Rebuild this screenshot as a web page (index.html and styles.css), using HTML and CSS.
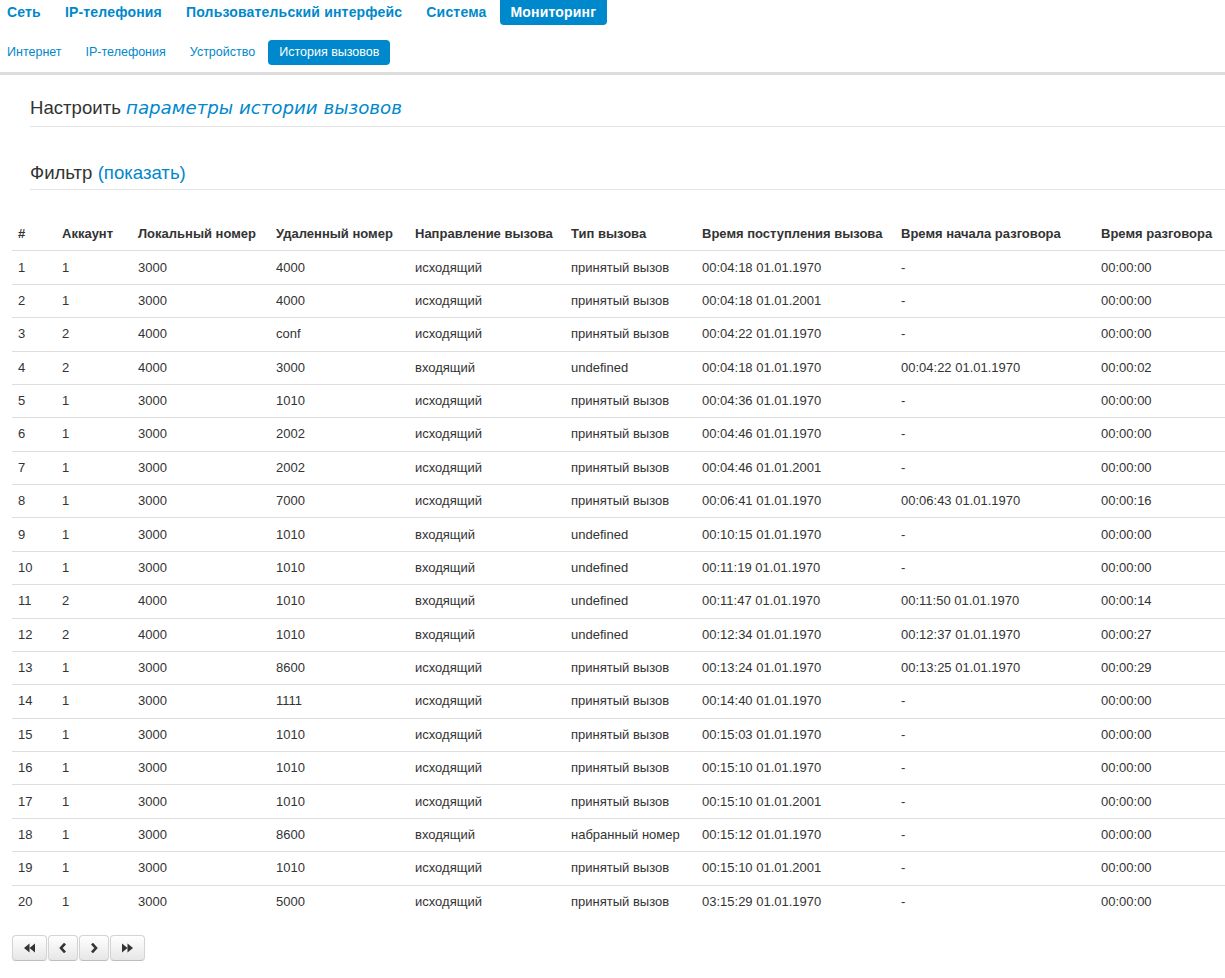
FILE: index.html
```html
<!DOCTYPE html>
<html lang="ru">
<head>
	<meta charset="utf-8">
	<title>История вызовов</title>
	<link rel="stylesheet" href="styles.css">
</head>
<body>
	<div class="menu">
		<ul class="nav nav-main">
			<li><a href="#">Сеть</a></li>
			<li><a href="#">IP-телефония</a></li>
			<li><a href="#">Пользовательский интерфейс</a></li>
			<li><a href="#">Система</a></li>
			<li class="active"><a href="#">Мониторинг</a></li>
		</ul>
		<ul class="nav nav-sub">
			<li><a href="#">Интернет</a></li>
			<li><a href="#">IP-телефония</a></li>
			<li><a href="#">Устройство</a></li>
			<li class="active"><a href="#">История вызовов</a></li>
		</ul>
	</div>

	<div class="content">
		<h3 class="section first">Настроить <a href="#" class="settings">параметры истории вызовов</a></h3>
		<h3 class="section">Фильтр <a href="#">(показать)</a></h3>
	</div>

	<table class="calls">
		<colgroup>
			<col class="c-num"><col class="c-acc"><col class="c-local"><col class="c-remote">
			<col class="c-dir"><col class="c-type"><col class="c-time"><col class="c-start"><col class="c-dur">
		</colgroup>
		<thead>
			<tr>
				<th>#</th>
				<th>Аккаунт</th>
				<th>Локальный номер</th>
				<th>Удаленный номер</th>
				<th>Направление вызова</th>
				<th>Тип вызова</th>
				<th>Время поступления вызова</th>
				<th>Время начала разговора</th>
				<th>Время разговора</th>
			</tr>
		</thead>
		<tbody>
			<tr><td>1</td><td>1</td><td>3000</td><td>4000</td><td>исходящий</td><td>принятый вызов</td><td>00:04:18 01.01.1970</td><td>-</td><td>00:00:00</td></tr>
			<tr><td>2</td><td>1</td><td>3000</td><td>4000</td><td>исходящий</td><td>принятый вызов</td><td>00:04:18 01.01.2001</td><td>-</td><td>00:00:00</td></tr>
			<tr><td>3</td><td>2</td><td>4000</td><td>conf</td><td>исходящий</td><td>принятый вызов</td><td>00:04:22 01.01.1970</td><td>-</td><td>00:00:00</td></tr>
			<tr><td>4</td><td>2</td><td>4000</td><td>3000</td><td>входящий</td><td>undefined</td><td>00:04:18 01.01.1970</td><td>00:04:22 01.01.1970</td><td>00:00:02</td></tr>
			<tr><td>5</td><td>1</td><td>3000</td><td>1010</td><td>исходящий</td><td>принятый вызов</td><td>00:04:36 01.01.1970</td><td>-</td><td>00:00:00</td></tr>
			<tr><td>6</td><td>1</td><td>3000</td><td>2002</td><td>исходящий</td><td>принятый вызов</td><td>00:04:46 01.01.1970</td><td>-</td><td>00:00:00</td></tr>
			<tr><td>7</td><td>1</td><td>3000</td><td>2002</td><td>исходящий</td><td>принятый вызов</td><td>00:04:46 01.01.2001</td><td>-</td><td>00:00:00</td></tr>
			<tr><td>8</td><td>1</td><td>3000</td><td>7000</td><td>исходящий</td><td>принятый вызов</td><td>00:06:41 01.01.1970</td><td>00:06:43 01.01.1970</td><td>00:00:16</td></tr>
			<tr><td>9</td><td>1</td><td>3000</td><td>1010</td><td>входящий</td><td>undefined</td><td>00:10:15 01.01.1970</td><td>-</td><td>00:00:00</td></tr>
			<tr><td>10</td><td>1</td><td>3000</td><td>1010</td><td>входящий</td><td>undefined</td><td>00:11:19 01.01.1970</td><td>-</td><td>00:00:00</td></tr>
			<tr><td>11</td><td>2</td><td>4000</td><td>1010</td><td>входящий</td><td>undefined</td><td>00:11:47 01.01.1970</td><td>00:11:50 01.01.1970</td><td>00:00:14</td></tr>
			<tr><td>12</td><td>2</td><td>4000</td><td>1010</td><td>входящий</td><td>undefined</td><td>00:12:34 01.01.1970</td><td>00:12:37 01.01.1970</td><td>00:00:27</td></tr>
			<tr><td>13</td><td>1</td><td>3000</td><td>8600</td><td>исходящий</td><td>принятый вызов</td><td>00:13:24 01.01.1970</td><td>00:13:25 01.01.1970</td><td>00:00:29</td></tr>
			<tr><td>14</td><td>1</td><td>3000</td><td>1111</td><td>исходящий</td><td>принятый вызов</td><td>00:14:40 01.01.1970</td><td>-</td><td>00:00:00</td></tr>
			<tr><td>15</td><td>1</td><td>3000</td><td>1010</td><td>исходящий</td><td>принятый вызов</td><td>00:15:03 01.01.1970</td><td>-</td><td>00:00:00</td></tr>
			<tr><td>16</td><td>1</td><td>3000</td><td>1010</td><td>исходящий</td><td>принятый вызов</td><td>00:15:10 01.01.1970</td><td>-</td><td>00:00:00</td></tr>
			<tr><td>17</td><td>1</td><td>3000</td><td>1010</td><td>исходящий</td><td>принятый вызов</td><td>00:15:10 01.01.2001</td><td>-</td><td>00:00:00</td></tr>
			<tr><td>18</td><td>1</td><td>3000</td><td>8600</td><td>входящий</td><td>набранный номер</td><td>00:15:12 01.01.1970</td><td>-</td><td>00:00:00</td></tr>
			<tr><td>19</td><td>1</td><td>3000</td><td>1010</td><td>исходящий</td><td>принятый вызов</td><td>00:15:10 01.01.2001</td><td>-</td><td>00:00:00</td></tr>
			<tr><td>20</td><td>1</td><td>3000</td><td>5000</td><td>исходящий</td><td>принятый вызов</td><td>03:15:29 01.01.1970</td><td>-</td><td>00:00:00</td></tr>
		</tbody>
	</table>

	<div class="btn-group">
		<button class="btn wide" title="Первая страница">
			<svg width="11" height="10" viewBox="0 0 11 10"><path d="M5.5 0.5 L0 5 L5.5 9.5 Z M11 0.5 L5.5 5 L11 9.5 Z" fill="#333"/></svg>
		</button>
		<button class="btn" title="Назад">
			<svg width="8" height="10" viewBox="0 0 8 10"><path d="M6 0.6 L2 5 L6 9.4" fill="none" stroke="#333" stroke-width="2.6"/></svg>
		</button>
		<button class="btn" title="Вперёд">
			<svg width="8" height="10" viewBox="0 0 8 10"><path d="M2 0.6 L6 5 L2 9.4" fill="none" stroke="#333" stroke-width="2.6"/></svg>
		</button>
		<button class="btn wide" title="Последняя страница">
			<svg width="11" height="10" viewBox="0 0 11 10"><path d="M0 0.5 L5.5 5 L0 9.5 Z M5.5 0.5 L11 5 L5.5 9.5 Z" fill="#333"/></svg>
		</button>
	</div>
</body>
</html>
```

FILE: styles.css
```css
body {
	margin: 0;
	padding: 0;
	background: #fff;
	color: #333;
	font-family: "Liberation Sans", Arial, sans-serif;
	font-size: 13px;
	line-height: 20px;
}

a {
	color: #0088cc;
	text-decoration: none;
}

/* navigation */

.menu {
	border-bottom: 3px solid #dddddd;
	padding-bottom: 7px;
}

.nav {
	list-style: none;
	margin: 0 0 0 -4px;
	padding: 0;
	display: flex;
}

.nav li {
	margin-right: 2px;
}

.nav a {
	display: block;
	padding: 0 11px;
}

.nav .active a {
	background: #0088cc;
	color: #fff;
}

.nav-main a {
	font-size: 14px;
	font-weight: bold;
	letter-spacing: 0.18px;
	line-height: 25px;
}

.nav-main .active a {
	border-radius: 0 0 4px 4px;
}

.nav-sub {
	margin-top: 15px;
}

.nav-sub a {
	font-size: 12.5px;
	line-height: 25px;
}

.nav-sub .active a {
	border-radius: 4px;
}

/* headings */

.content {
	margin-left: 30px;
}

.section {
	margin: 0;
	font-size: 18.6px;
	font-weight: normal;
	line-height: 20px;
	border-bottom: 1px solid #e5e5e5;
}

.section.first {
	margin-top: 23px;
	padding-bottom: 8px;
}

.section + .section {
	margin-top: 36px;
	padding-bottom: 6px;
}

.settings {
	font-family: "DejaVu Sans", sans-serif;
	font-size: 18.2px;
	font-style: italic;
}

/* table */

.calls {
	margin: 28px 0 0 12px;
	border-collapse: collapse;
	table-layout: fixed;
	width: 1213px;
}

.c-num { width: 44px; }
.c-acc { width: 76px; }
.c-local { width: 138px; }
.c-remote { width: 139px; }
.c-dir { width: 156px; }
.c-type { width: 131px; }
.c-time { width: 199px; }
.c-start { width: 200px; }
.c-dur { width: 130px; }

.calls th,
.calls td {
	text-align: left;
	padding: 6.2px 6px;
	white-space: nowrap;
}

.calls th {
	font-weight: bold;
	border-bottom: 1px solid #dddddd;
}

.calls td {
	border-top: 1px solid #dddddd;
}

.calls tbody tr:first-child td {
	border-top: none;
}

/* pagination */

.btn-group {
	display: flex;
	margin: 17px 0 0 12px;
}

.btn {
	display: flex;
	align-items: center;
	justify-content: center;
	width: 30px;
	height: 26px;
	padding: 0;
	margin-right: 1px;
	background: linear-gradient(#ffffff, #e6e6e6);
	border: 1px solid #d4d4d4;
	border-bottom-color: #bdbdbd;
	border-radius: 4px;
	box-shadow: inset 0 1px 0 rgba(255, 255, 255, .2), 0 1px 2px rgba(0, 0, 0, .05);
	cursor: pointer;
}

.btn.wide {
	width: 35px;
}
```
